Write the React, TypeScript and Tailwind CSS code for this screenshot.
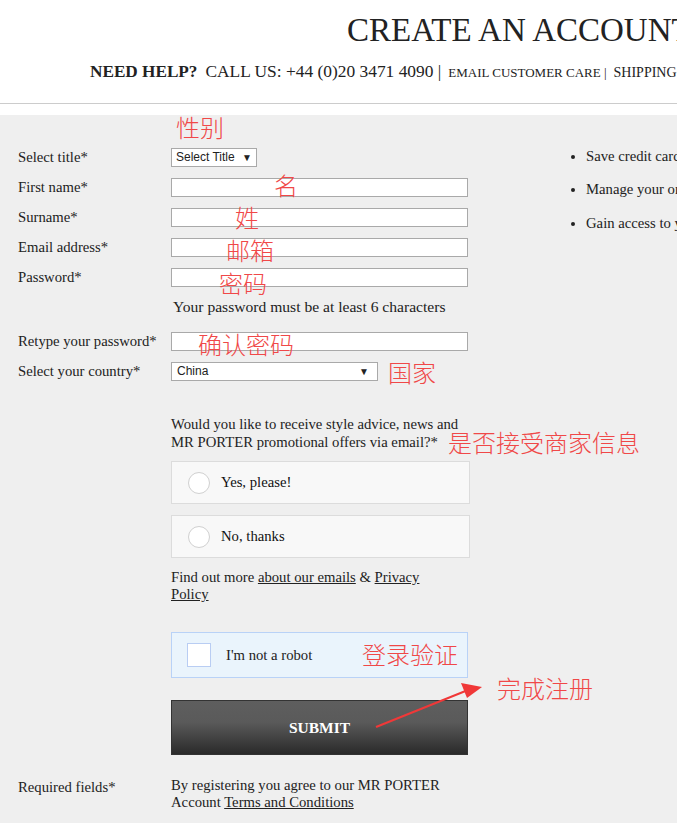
import React from "react";

const serif = { fontFamily: '"Liberation Serif", "Times New Roman", serif' };
const cjk = { fontFamily: '"Noto Sans CJK SC", sans-serif' };
const arial = { fontFamily: '"Liberation Sans", Arial, sans-serif' };

function Row({ label, children }: { label: string; children?: React.ReactNode }) {
  return (
    <div className="flex h-[30px] items-center">
      <div className="w-[153px] text-[14.7px] text-[#222]">{label}</div>
      {children}
    </div>
  );
}

const Input = () => <div className="h-[19px] w-[297px] border border-[#a9a9a9] bg-white" />;

function Note({ text, className }: { text: string; className: string }) {
  return (
    <div className={"absolute text-[24px] font-light leading-none text-[#f04848] whitespace-nowrap " + className} style={cjk}>
      {text}
    </div>
  );
}

export default function App() {
  return (
    <div className="relative h-[823px] w-[677px] overflow-hidden bg-white" style={serif}>
      {/* Header */}
      <div className="h-[103px] whitespace-nowrap">
        <div className="pl-[347px] pt-[12px] text-[33px] leading-[36px] text-[#222]">CREATE AN ACCOUNT</div>
        <div className="flex items-baseline pl-[90px] pt-[10px] text-[17.4px] text-[#222]">
          <span className="text-[17.2px] font-bold">NEED HELP?</span>
          <span className="ml-[8px]">CALL US: +44 (0)20 3471 4090 |</span>
          <span className="ml-[7px] text-[13px]">EMAIL CUSTOMER CARE |</span>
          <span className="ml-[7px] text-[14px]">SHIPPING</span>
        </div>
      </div>
      <div className="h-px bg-[#cccccc]" />
      <div className="h-[11px] bg-white" />

      {/* Main */}
      <div className="flex h-[708px] bg-[#efefef]">
        <div className="w-[549px] shrink-0 pl-[18px] pt-[27px]">
          <Row label="Select title*">
            <div className="flex h-[19px] w-[86px] items-center justify-between border border-[#a9a9a9] bg-white px-[4px] text-[12px] text-[#222]" style={arial}>
              <span>Select Title</span>
              <span className="text-[10px]">▼</span>
            </div>
          </Row>
          <Row label="First name*"><Input /></Row>
          <Row label="Surname*"><Input /></Row>
          <Row label="Email address*"><Input /></Row>
          <Row label="Password*"><Input /></Row>
          <div className="flex h-[30px] items-center pl-[155px] text-[15.6px] text-[#222]">
            Your password must be at least 6 characters
          </div>
          <div className="h-[4px]" />
          <Row label="Retype your password*"><Input /></Row>
          <Row label="Select your country*">
            <div className="flex h-[19px] w-[207px] items-center justify-between border border-[#a9a9a9] bg-white pl-[5px] pr-[8px] text-[12px] text-[#222]" style={arial}>
              <span>China</span>
              <span className="text-[10px]">▼</span>
            </div>
          </Row>

          <div className="ml-[153px] w-[300px]">
            <p className="mt-[29px] w-[295px] text-[14.7px] leading-[18px] text-[#222]">
              Would you like to receive style advice, news and MR PORTER promotional offers via email?*
            </p>
            <div className="mt-[10px] flex h-[43px] w-[299px] items-center border border-[#dcdcdc] bg-[#f8f8f8] pl-[16px] text-[14.7px] text-[#111]">
              <div className="h-[22px] w-[22px] rounded-full border border-[#d0d0d0] bg-white" />
              <span className="ml-[11px]">Yes, please!</span>
            </div>
            <div className="mt-[11px] flex h-[43px] w-[299px] items-center border border-[#dcdcdc] bg-[#f8f8f8] pl-[16px] text-[14.7px] text-[#111]">
              <div className="h-[22px] w-[22px] rounded-full border border-[#d0d0d0] bg-white" />
              <span className="ml-[11px]">No, thanks</span>
            </div>
            <p className="mt-[11px] w-[270px] text-[14.7px] leading-[17px] text-[#222]">
              Find out more <span className="underline">about our emails</span> &amp; <span className="underline">Privacy Policy</span>
            </p>
            <div className="mt-[29px] flex h-[46px] w-[297px] items-center border border-[#b9d2f7] bg-[#eaf4fc] pl-[15px]">
              <div className="h-[24px] w-[24px] border border-[#b9cdf3] bg-white" />
              <span className="ml-[15px] text-[14.7px] text-[#222]">I'm not a robot</span>
            </div>
            <div
              className="mt-[22px] flex h-[55px] w-[297px] items-center justify-center border border-[#333] text-[15.5px] font-bold text-white"
              style={{ background: "linear-gradient(#5e5e5e 0%, #5a5a5a 40%, #2a2a2a 100%)" }}
            >
              SUBMIT
            </div>
          </div>
          <div className="mt-[22px] flex">
            <div className="w-[153px] pt-[2px] text-[14.7px] leading-[17px] text-[#222]">Required fields*</div>
            <p className="w-[300px] text-[14.7px] leading-[17px] text-[#222]">
              By registering you agree to our MR PORTER Account <span className="underline">Terms and Conditions</span>
            </p>
          </div>
        </div>
        <ul className="list-disc whitespace-nowrap pl-[37px] pt-[32px] text-[14.7px] leading-[18px] text-[#222]">
          <li className="h-[33px]">Save credit card details</li>
          <li className="h-[34px]">Manage your orders</li>
          <li>Gain access to your account</li>
        </ul>
      </div>

      {/* Annotations */}
      <Note text="性别" className="left-[176px] top-[115px]" />
      <Note text="名" className="left-[274px] top-[173px]" />
      <Note text="姓" className="left-[235px] top-[205px]" />
      <Note text="邮箱" className="left-[226px] top-[238px]" />
      <Note text="密码" className="left-[219px] top-[271px]" />
      <Note text="确认密码" className="left-[198px] top-[332px]" />
      <Note text="国家" className="left-[388px] top-[360px]" />
      <Note text="是否接受商家信息" className="left-[448px] top-[430px]" />
      <Note text="登录验证" className="left-[362px] top-[642px]" />
      <Note text="完成注册" className="left-[497px] top-[676px]" />
      <svg className="absolute left-0 top-0" width="677" height="823" viewBox="0 0 677 823">
        <line x1="376" y1="727" x2="468" y2="690" stroke="#f03838" strokeWidth="2" />
        <polygon points="482,687 461,683 467,698" fill="#f03838" />
      </svg>
    </div>
  );
}
